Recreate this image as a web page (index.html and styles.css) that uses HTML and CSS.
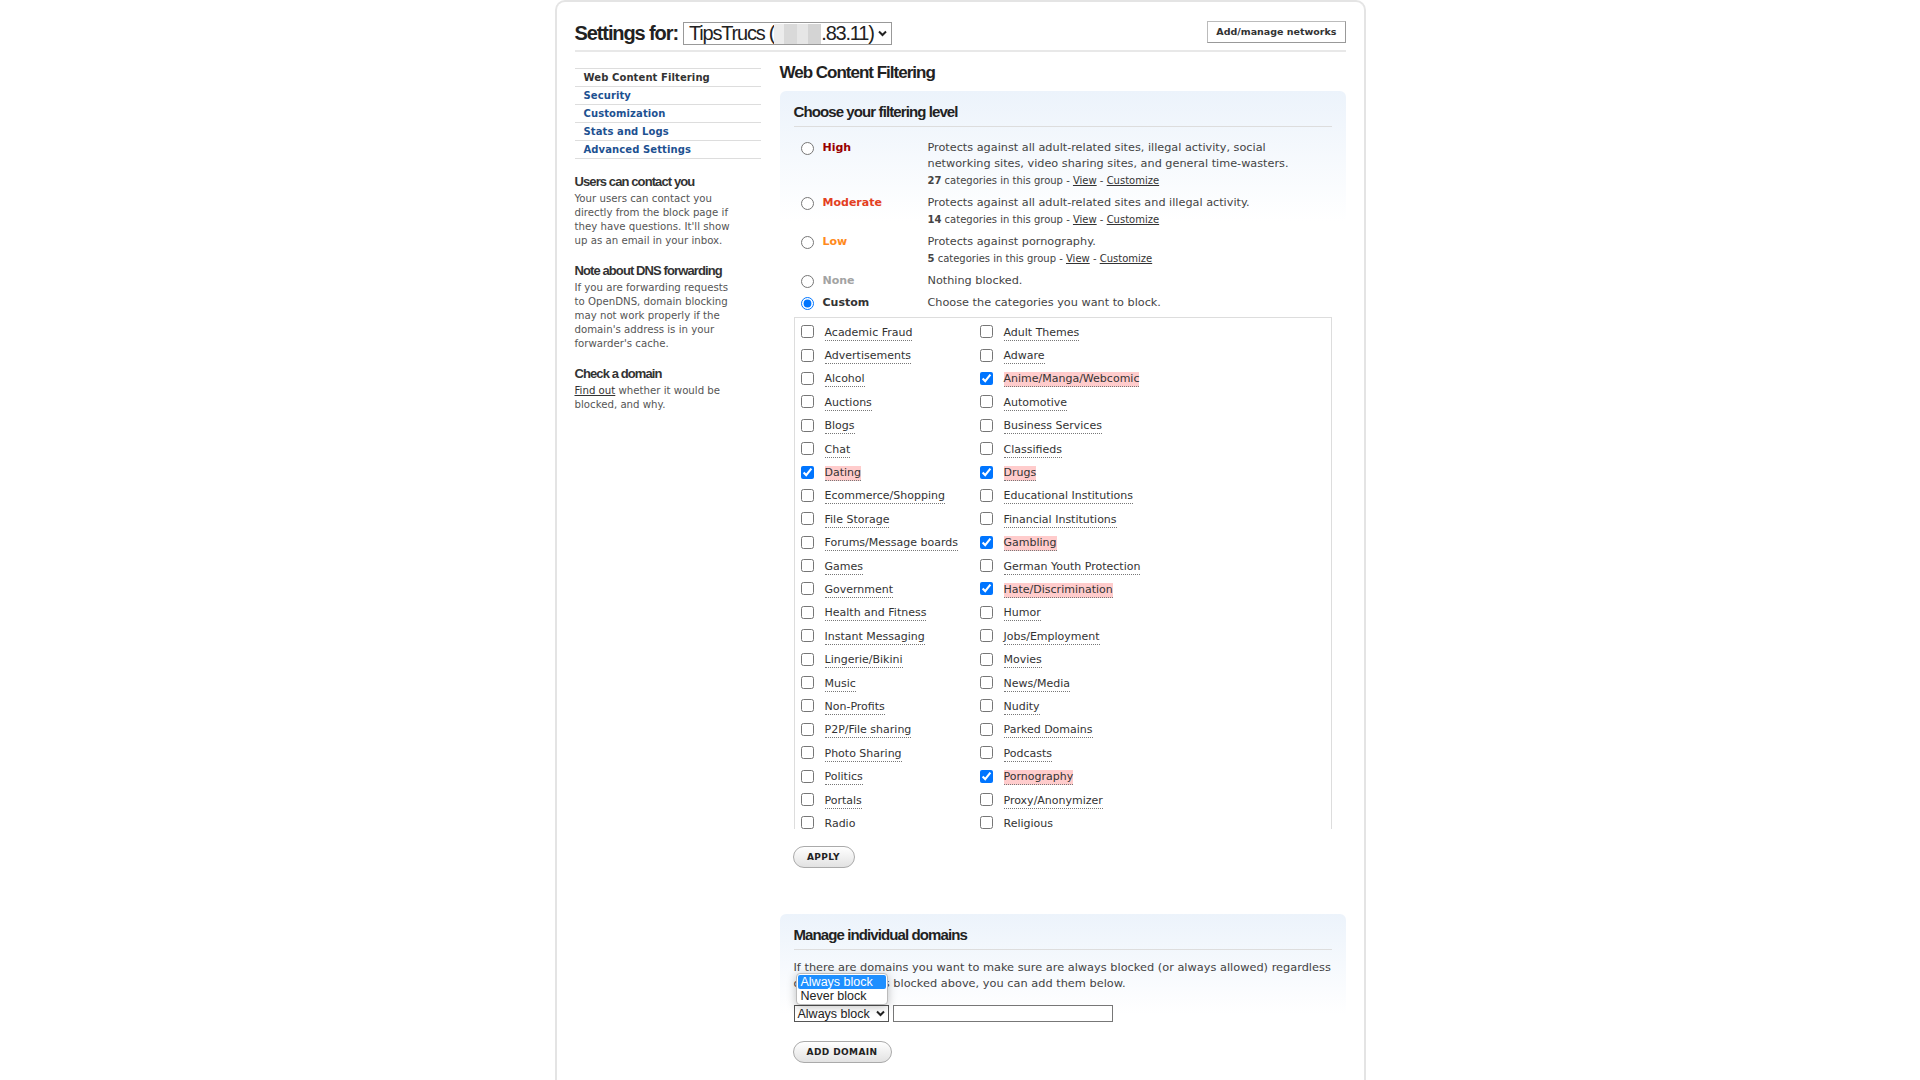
FILE: index.html
```html
<!DOCTYPE html>
<html>
<head>
    <meta charset="UTF-8">
    <title>Settings - Web Content Filtering</title>
    <link rel="stylesheet" href="styles.css">
</head>
<body>
    <div class="page">
        <div class="header">
            <h1>Settings for:</h1>
            <div class="site-select"><span>TipsTrucs (</span><span class="masked"></span><span>.83.11)</span><svg class="chev" width="9" height="7" viewBox="0 0 9 7"><path d="M1 1.5l3.5 3.5L8 1.5" fill="none" stroke="#222" stroke-width="2"/></svg></div>
            <a href="#" class="manage-btn">Add/manage networks</a>
        </div>

        <div class="layout">
            <div class="sidebar">
                <ul class="subnav">
                    <li class="current"><a href="#">Web Content Filtering</a></li>
                    <li><a href="#">Security</a></li>
                    <li><a href="#">Customization</a></li>
                    <li><a href="#">Stats and Logs</a></li>
                    <li><a href="#">Advanced Settings</a></li>
                </ul>

                <h3>Users can contact you</h3>
                <p>Your users can contact you directly from the block page if they have questions. It'll show up as an email in your inbox.</p>

                <h3>Note about DNS forwarding</h3>
                <p>If you are forwarding requests to OpenDNS, domain blocking may not work properly if the domain's address is in your forwarder's cache.</p>

                <h3>Check a domain</h3>
                <p><a href="#">Find out</a> whether it would be blocked, and why.</p>
            </div>

            <div class="main">
                <h2>Web Content Filtering</h2>

                <div class="panel">
                    <h4>Choose your filtering level</h4>

                    <div class="levels">
                        <div class="level">
                            <label class="level-name high"><input type="radio" name="level">High</label>
                            <div class="level-desc">
                                Protects against all adult-related sites, illegal activity, social networking sites, video sharing sites, and general time-wasters.
                                <div class="level-count"><b>27</b> categories in this group - <a href="#">View</a> - <a href="#">Customize</a></div>
                            </div>
                        </div>
                        <div class="level">
                            <label class="level-name moderate"><input type="radio" name="level">Moderate</label>
                            <div class="level-desc">
                                Protects against all adult-related sites and illegal activity.
                                <div class="level-count"><b>14</b> categories in this group - <a href="#">View</a> - <a href="#">Customize</a></div>
                            </div>
                        </div>
                        <div class="level">
                            <label class="level-name low"><input type="radio" name="level">Low</label>
                            <div class="level-desc">
                                Protects against pornography.
                                <div class="level-count"><b>5</b> categories in this group - <a href="#">View</a> - <a href="#">Customize</a></div>
                            </div>
                        </div>
                        <div class="level">
                            <label class="level-name none"><input type="radio" name="level">None</label>
                            <div class="level-desc">Nothing blocked.</div>
                        </div>
                        <div class="level">
                            <label class="level-name custom"><input type="radio" name="level" checked>Custom</label>
                            <div class="level-desc">Choose the categories you want to block.</div>
                        </div>
                    </div>

                    <div class="categories">
                        <label class="cat"><input type="checkbox"><span>Academic Fraud</span></label>
                        <label class="cat"><input type="checkbox"><span>Adult Themes</span></label>
                        <label class="cat"><input type="checkbox"><span>Advertisements</span></label>
                        <label class="cat"><input type="checkbox"><span>Adware</span></label>
                        <label class="cat"><input type="checkbox"><span>Alcohol</span></label>
                        <label class="cat on"><input type="checkbox" checked><span>Anime/Manga/Webcomic</span></label>
                        <label class="cat"><input type="checkbox"><span>Auctions</span></label>
                        <label class="cat"><input type="checkbox"><span>Automotive</span></label>
                        <label class="cat"><input type="checkbox"><span>Blogs</span></label>
                        <label class="cat"><input type="checkbox"><span>Business Services</span></label>
                        <label class="cat"><input type="checkbox"><span>Chat</span></label>
                        <label class="cat"><input type="checkbox"><span>Classifieds</span></label>
                        <label class="cat on"><input type="checkbox" checked><span>Dating</span></label>
                        <label class="cat on"><input type="checkbox" checked><span>Drugs</span></label>
                        <label class="cat"><input type="checkbox"><span>Ecommerce/Shopping</span></label>
                        <label class="cat"><input type="checkbox"><span>Educational Institutions</span></label>
                        <label class="cat"><input type="checkbox"><span>File Storage</span></label>
                        <label class="cat"><input type="checkbox"><span>Financial Institutions</span></label>
                        <label class="cat"><input type="checkbox"><span>Forums/Message boards</span></label>
                        <label class="cat on"><input type="checkbox" checked><span>Gambling</span></label>
                        <label class="cat"><input type="checkbox"><span>Games</span></label>
                        <label class="cat"><input type="checkbox"><span>German Youth Protection</span></label>
                        <label class="cat"><input type="checkbox"><span>Government</span></label>
                        <label class="cat on"><input type="checkbox" checked><span>Hate/Discrimination</span></label>
                        <label class="cat"><input type="checkbox"><span>Health and Fitness</span></label>
                        <label class="cat"><input type="checkbox"><span>Humor</span></label>
                        <label class="cat"><input type="checkbox"><span>Instant Messaging</span></label>
                        <label class="cat"><input type="checkbox"><span>Jobs/Employment</span></label>
                        <label class="cat"><input type="checkbox"><span>Lingerie/Bikini</span></label>
                        <label class="cat"><input type="checkbox"><span>Movies</span></label>
                        <label class="cat"><input type="checkbox"><span>Music</span></label>
                        <label class="cat"><input type="checkbox"><span>News/Media</span></label>
                        <label class="cat"><input type="checkbox"><span>Non-Profits</span></label>
                        <label class="cat"><input type="checkbox"><span>Nudity</span></label>
                        <label class="cat"><input type="checkbox"><span>P2P/File sharing</span></label>
                        <label class="cat"><input type="checkbox"><span>Parked Domains</span></label>
                        <label class="cat"><input type="checkbox"><span>Photo Sharing</span></label>
                        <label class="cat"><input type="checkbox"><span>Podcasts</span></label>
                        <label class="cat"><input type="checkbox"><span>Politics</span></label>
                        <label class="cat on"><input type="checkbox" checked><span>Pornography</span></label>
                        <label class="cat"><input type="checkbox"><span>Portals</span></label>
                        <label class="cat"><input type="checkbox"><span>Proxy/Anonymizer</span></label>
                        <label class="cat"><input type="checkbox"><span>Radio</span></label>
                        <label class="cat"><input type="checkbox"><span>Religious</span></label>
                    </div>

                    <button type="button" class="pill-btn apply">Apply</button>
                </div>

                <div class="panel domains">
                    <h4>Manage individual domains</h4>
                    <p>If there are domains you want to make sure are always blocked (or always allowed) regardless of the categories blocked above, you can add them below.</p>
                    <div class="domain-row">
                        <div class="fake-select">
                            Always block
                            <svg class="chev" width="9" height="7" viewBox="0 0 9 7"><path d="M1 1.5l3.5 3.5L8 1.5" fill="none" stroke="#222" stroke-width="2"/></svg>
                        </div>
                        <input type="text" class="domain-input">
                        <ul class="dropdown">
                            <li class="picked">Always block</li>
                            <li>Never block</li>
                        </ul>
                    </div>
                    <button type="button" class="pill-btn add">Add domain</button>
                </div>
            </div>
        </div>
    </div>
</body>
</html>
```

FILE: styles.css
```css
* {
    margin: 0;
    padding: 0;
    box-sizing: border-box;
}

body {
    background: #fff;
    font-family: "DejaVu Sans", Verdana, sans-serif;
    font-size: 11px;
    color: #444;
}

a {
    color: #333;
}

.page {
    width: 811px;
    min-height: 1080px;
    margin: 0 auto;
    padding: 0 18px;
    border: 2px solid #e4e4e4;
    border-bottom: none;
    border-radius: 10px 10px 0 0;
}

/* header */
.header {
    display: flex;
    align-items: flex-start;
    height: 50px;
    padding-top: 19px;
    border-bottom: 2px solid #e8e8e8;
}
.header h1 {
    font-family: "Liberation Sans", Arial, sans-serif;
    font-size: 20px;
    font-weight: bold;
    letter-spacing: -1.1px;
    color: #222;
    line-height: 22px;
    margin-top: 1px;
}
.site-select {
    display: flex;
    align-items: center;
    height: 23px;
    margin-left: 5px;
    margin-top: 1px;
    padding: 0 4px 0 5px;
    border: 1px solid #999;
    font-family: "Liberation Sans", Arial, sans-serif;
    font-size: 20px;
    letter-spacing: -1.2px;
    color: #222;
    white-space: nowrap;
}
.masked {
    display: inline-block;
    width: 47px;
    height: 20px;
    background: linear-gradient(90deg, #ececec 0 22%, #d9d9d9 22% 48%, #e6e6e6 48% 72%, #d4d4d4 72%);
}
.site-select .chev {
    margin-left: 4px;
}
.manage-btn {
    margin-left: auto;
    height: 22px;
    padding: 0 8px;
    border: 1px solid #bbb;
    border-right-color: #999;
    border-bottom-color: #999;
    font-size: 9.5px;
    font-weight: bold;
    line-height: 20px;
    color: #333;
    text-decoration: none;
}

/* two columns */
.layout {
    display: flex;
    gap: 19px;
    margin-top: 16px;
}
.sidebar {
    width: 186px;
    flex-shrink: 0;
}
.subnav {
    list-style: none;
    border-top: 1px solid #ddd;
}
.subnav li {
    height: 18px;
    border-bottom: 1px solid #ddd;
}
.subnav li a {
    display: block;
    padding-left: 9px;
    font-size: 10px;
    font-weight: bold;
    letter-spacing: 0.1px;
    line-height: 17px;
    color: #1d5191;
    text-decoration: none;
}
.subnav li.current a {
    color: #333;
}
.sidebar h3 {
    margin-top: 15px;
    font-family: "Liberation Sans", Arial, sans-serif;
    font-size: 13px;
    font-weight: bold;
    letter-spacing: -0.9px;
    line-height: 16px;
    color: #333;
}
.sidebar p {
    width: 162px;
    margin-top: 2px;
    font-size: 10.2px;
    line-height: 14px;
    color: #555;
}

.main {
    width: 566px;
}
.main h2 {
    margin: -5px 0 8px;
    font-family: "Liberation Sans", Arial, sans-serif;
    font-size: 17px;
    font-weight: bold;
    letter-spacing: -1px;
    line-height: 20px;
    color: #222;
}

.panel {
    padding: 12px 14px 0;
    border-radius: 6px 6px 0 0;
    background: linear-gradient(#ecf3fb, #fff 130px);
}
.panel h4 {
    padding-bottom: 5px;
    border-bottom: 1px solid #ddd;
    font-family: "Liberation Sans", Arial, sans-serif;
    font-size: 15px;
    font-weight: bold;
    letter-spacing: -0.9px;
    line-height: 18px;
    color: #222;
}

/* filtering levels */
.levels {
    margin-top: 13px;
}
.level {
    display: grid;
    grid-template-columns: 134px 395px;
    margin-bottom: 6px;
    line-height: 16px;
}
.level:last-child {
    margin-bottom: 6px;
}
.level-name {
    display: flex;
    align-items: center;
    height: 16px;
    font-weight: bold;
}
.level-name input {
    width: 13px;
    height: 13px;
    margin: 0 9px 0 7px;
}
.high { color: #990000; }
.moderate { color: #e3401f; }
.low { color: #ff8a1c; }
.none { color: #a3a3a3; }
.custom { color: #333; }
.level-desc {
    font-size: 11.25px;
    color: #444;
}
.level-count {
    margin-top: 1px;
    font-size: 10px;
}
.level-count a {
    color: #333;
}

/* category list */
.categories {
    display: grid;
    grid-template-columns: 179px 1fr;
    grid-auto-rows: 23.4px;
    height: 512px;
    padding-top: 3.5px;
    border: 1px solid #ddd;
    border-bottom: none;
    overflow: hidden;
}
.cat {
    display: flex;
    align-items: center;
    color: #333;
}
.cat input {
    width: 13px;
    height: 13px;
    margin: 0 11px 3px 6px;
}
.cat span {
    border-bottom: 1px dotted #777;
    line-height: 14px;
}
.cat.on span {
    background: #ffcccc;
}

.pill-btn {
    display: block;
    height: 22px;
    margin-top: 17px;
    margin-left: -1px;
    border: 1px solid #aaa;
    border-radius: 11px;
    background: linear-gradient(#fff, #e2e2e2);
    font-family: "DejaVu Sans", Verdana, sans-serif;
    font-size: 9px;
    font-weight: bold;
    letter-spacing: 0.4px;
    text-transform: uppercase;
    color: #222;
}
.apply {
    width: 62px;
}
.add {
    width: 99px;
}

/* manage domains */
.domains {
    margin-top: 46px;
    background: linear-gradient(#ecf3fb, #fff 100px);
}
.domains p {
    width: 540px;
    margin-top: 9px;
    font-size: 11.35px;
    line-height: 16px;
    color: #444;
}
.domain-row {
    position: relative;
    display: flex;
    gap: 4px;
    margin-top: 14px;
}
.fake-select {
    display: flex;
    align-items: center;
    width: 95px;
    height: 17px;
    padding: 0 3px;
    border: 1px solid #555;
    background: #fff;
    font-family: "Liberation Sans", Arial, sans-serif;
    font-size: 12.5px;
    color: #222;
}
.fake-select .chev {
    margin-left: auto;
}
.domain-input {
    width: 220px;
    height: 17px;
    border: 1px solid #777;
}
.dropdown {
    position: absolute;
    left: 2px;
    bottom: 17px;
    width: 92px;
    padding: 1px;
    list-style: none;
    border: 1px solid #bbb;
    border-radius: 4px;
    background: #fff;
    box-shadow: 0 2px 10px rgba(0, 0, 0, 0.25);
    font-family: "Liberation Sans", Arial, sans-serif;
    font-size: 12.5px;
    line-height: 14px;
    color: #222;
}
.dropdown li {
    padding-left: 3px;
    border-radius: 2px;
}
.dropdown li.picked {
    background: #1e8fff;
    color: #fff;
}
.domains .pill-btn {
    margin-top: 19px;
}
```
